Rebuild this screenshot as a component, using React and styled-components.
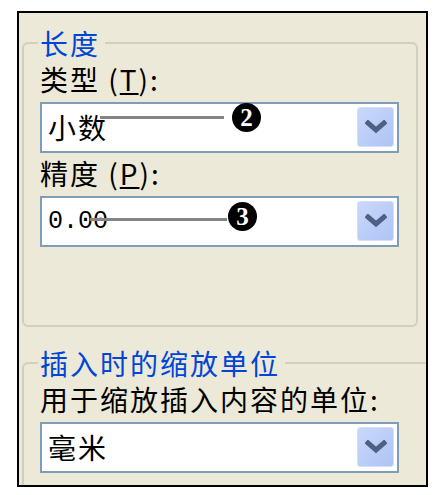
import React from "react";
import styled, { createGlobalStyle } from "styled-components";

const GlobalStyle = createGlobalStyle`
  html, body {
    margin: 0;
    padding: 0;
    background: #ffffff;
  }
`;

const cjk = `"Noto Sans CJK SC", "Noto Sans", sans-serif`;

const Combo = ({ value, mono, callout }) => (
  <ComboBox>
    <ComboText mono={mono}>{value}</ComboText>
    <DropButton>
      <svg width="22" height="14" viewBox="0 0 22 14">
        <path
          d="M3 3 L11 10 L19 3"
          fill="none"
          stroke="#4D6185"
          strokeWidth="5"
          strokeLinecap="square"
        />
      </svg>
    </DropButton>
    {callout && (
      <>
        <Leader left={callout.lineLeft} top={callout.lineTop} width={callout.lineWidth} />
        <Badge left={callout.badgeLeft} top={callout.badgeTop}>
          {callout.num}
        </Badge>
      </>
    )}
  </ComboBox>
);

const App = () => {
  return (
    <>
      <GlobalStyle />
      <Frame>
        <Group>
          <Legend>长度</Legend>
          <Label>
            类型 (<u>T</u>):
          </Label>
          <Combo
            value="小数"
            callout={{ num: "2", lineLeft: 58, lineTop: 12, lineWidth: 124, badgeLeft: 190, badgeTop: -1 }}
          />
          <Label>
            精度 (<u>P</u>):
          </Label>
          <Combo
            value="0.00"
            mono
            callout={{ num: "3", lineLeft: 48, lineTop: 20, lineWidth: 137, badgeLeft: 186, badgeTop: 4 }}
          />
        </Group>
        <Group wide>
          <Legend>插入时的缩放单位</Legend>
          <Label>用于缩放插入内容的单位:</Label>
          <Combo value="毫米" />
        </Group>
      </Frame>
    </>
  );
};

const Frame = styled.div({
  marginTop: "11px",
  marginLeft: "17px",
  width: "411px",
  height: "476px",
  boxSizing: "border-box",
  border: "2px solid #000000",
  background: "#ECE9D8",
  overflow: "hidden",
  paddingLeft: "3px",
  paddingTop: "14px"
});

const Group = styled.fieldset`
  margin: ${(p) => (p.wide ? "20px 0 0 0" : "0")};
  width: ${(p) => (p.wide ? "430px" : "396px")};
  box-sizing: border-box;
  border: 2px solid #D0D0BF;
  border-radius: 6px;
  padding: 0 17px ${(p) => (p.wide ? "40px" : "78px")} 16px;
  min-inline-size: 0;
`;

const Legend = styled.legend({
  padding: "0 5px 0 2px",
  marginLeft: "-2px",
  fontFamily: cjk,
  fontSize: "28px",
  lineHeight: "32px",
  letterSpacing: "2px",
  color: "#0046D5"
});

const Label = styled.div({
  height: "34px",
  lineHeight: "34px",
  margin: "3px 0 6px",
  fontFamily: cjk,
  fontSize: "28px",
  letterSpacing: "2px",
  color: "#000000",
  whiteSpace: "nowrap"
});

const ComboBox = styled.div({
  position: "relative",
  width: "359px",
  height: "51px",
  boxSizing: "border-box",
  border: "2px solid #7F9DB9",
  background: "#ffffff",
  display: "flex",
  alignItems: "center",
  justifyContent: "space-between",
  padding: "0 3px 1px 6px"
});

const ComboText = styled.span`
  font-family: ${(p) => (p.mono ? `"Liberation Mono", monospace` : cjk)};
  font-size: ${(p) => (p.mono ? "25px" : "28px")};
  letter-spacing: ${(p) => (p.mono ? "0" : "2px")};
  color: #000000;
`;

const DropButton = styled.div({
  width: "37px",
  height: "40px",
  boxSizing: "border-box",
  borderRadius: "3px",
  border: "1px solid #D4DEF8",
  background: "linear-gradient(135deg, #CAD8FA 0%, #B9CCF8 60%, #AFC4F5 100%)",
  display: "flex",
  alignItems: "center",
  justifyContent: "center"
});

const Leader = styled.span`
  position: absolute;
  left: ${(p) => p.left}px;
  top: ${(p) => p.top}px;
  width: ${(p) => p.width}px;
  height: 3px;
  background: #858585;
`;

const Badge = styled.span`
  position: absolute;
  left: ${(p) => p.left}px;
  top: ${(p) => p.top}px;
  width: 29px;
  height: 29px;
  border-radius: 50%;
  background: #000000;
  color: #ffffff;
  font-family: "Liberation Serif", serif;
  font-weight: bold;
  font-size: 25px;
  line-height: 29px;
  text-align: center;
`;

export default App;
